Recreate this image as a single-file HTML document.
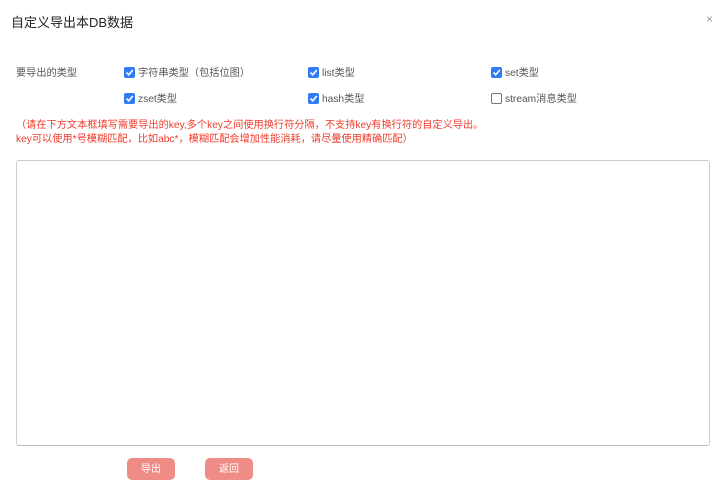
<!DOCTYPE html>
<html><head><meta charset="utf-8"><style>
body{margin:0;width:712px;height:500px;background:#fff;font-family:"Liberation Sans","Noto Sans CJK SC",sans-serif;color:#555;position:relative;overflow:hidden}
.a{position:absolute;white-space:nowrap}
.t{font-size:13px;color:#222;left:11px;top:12px}
.l{font-size:10.2px;line-height:14px}
.cb{position:absolute;width:11px;height:11px;border-radius:2px;background:#2f7cf6}
.cb svg{position:absolute;left:1px;top:1px}
.cu{position:absolute;width:9px;height:9px;border:1px solid #777;border-radius:2px;background:#fff}
.r{color:#f03b2c;font-size:10.2px;line-height:14px}
.ta{position:absolute;left:16px;top:160px;width:692px;height:284px;border:1px solid #ccc;border-bottom-color:#bbb;border-radius:3px}
.b{position:absolute;top:458px;width:48px;height:22px;background:#f08c87;border-radius:5px;color:#fff;font-size:10px;line-height:23px;text-align:center}
</style></head><body>
<div class="a t">自定义导出本DB数据</div>
<div class="a" style="left:706px;top:12px;font-size:12px;color:#999">×</div>
<div class="a l" style="left:16px;top:67px">要导出的类型</div>
<div class="cb" style="left:124px;top:67px"><svg width="9" height="9"><path d="M1.5 4.5L3.7 6.8L7.8 2" stroke="#fff" stroke-width="1.6" fill="none"/></svg></div>
<div class="a l" style="left:138px;top:67px">字符串类型（包括位图）</div>
<div class="cb" style="left:308px;top:67px"><svg width="9" height="9"><path d="M1.5 4.5L3.7 6.8L7.8 2" stroke="#fff" stroke-width="1.6" fill="none"/></svg></div>
<div class="a l" style="left:322px;top:67px">list类型</div>
<div class="cb" style="left:491px;top:67px"><svg width="9" height="9"><path d="M1.5 4.5L3.7 6.8L7.8 2" stroke="#fff" stroke-width="1.6" fill="none"/></svg></div>
<div class="a l" style="left:505px;top:67px">set类型</div>
<div class="cb" style="left:124px;top:93px"><svg width="9" height="9"><path d="M1.5 4.5L3.7 6.8L7.8 2" stroke="#fff" stroke-width="1.6" fill="none"/></svg></div>
<div class="a l" style="left:138px;top:93px">zset类型</div>
<div class="cb" style="left:308px;top:93px"><svg width="9" height="9"><path d="M1.5 4.5L3.7 6.8L7.8 2" stroke="#fff" stroke-width="1.6" fill="none"/></svg></div>
<div class="a l" style="left:322px;top:93px">hash类型</div>
<div class="cu" style="left:491px;top:93px"></div>
<div class="a l" style="left:505px;top:93px">stream消息类型</div>
<div class="a r" style="left:16px;top:119px">（请在下方文本框填写需要导出的key,多个key之间使用换行符分隔，不支持key有换行符的自定义导出。</div>
<div class="a r" style="left:16px;top:133px">key可以使用*号模糊匹配，比如abc*，模糊匹配会增加性能消耗，请尽量使用精确匹配）</div>
<div class="ta"></div>
<div class="b" style="left:127px">导出</div>
<div class="b" style="left:205px">返回</div>
</body></html>
